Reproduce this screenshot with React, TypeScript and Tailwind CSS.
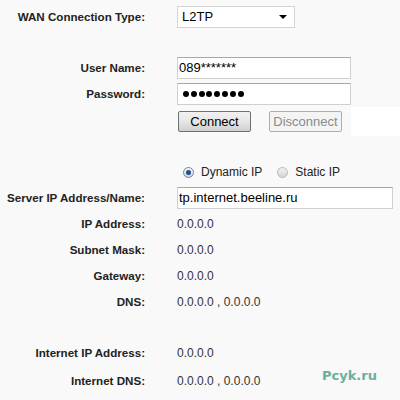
import React from 'react'

const font = { fontFamily: '"Liberation Sans", Arial, sans-serif' }

function Row({
  label,
  children,
  className = '',
}: {
  label?: string
  children?: React.ReactNode
  className?: string
}) {
  return (
    <div className={'flex items-center ' + className}>
      <div className="w-[145px] shrink-0 text-right text-[11.6px] font-bold text-[#222]">{label}</div>
      <div className="ml-[32px] flex items-center text-[12px] text-[#333]">{children}</div>
    </div>
  )
}

function Radio({ checked }: { checked?: boolean }) {
  return (
    <span
      className={
        'flex h-[11px] w-[11px] items-center justify-center rounded-full border ' +
        (checked
          ? 'border-[#6b88a8] bg-gradient-to-b from-[#f4f8fc] to-[#c9d7e6]'
          : 'border-[#b8b8b8] bg-gradient-to-b from-[#f2f2f2] to-[#d6d6d6]')
      }
    >
      {checked && <span className="h-[5px] w-[5px] rounded-full bg-[#1f4f86]" />}
    </span>
  )
}

export default function App() {
  return (
    <div className="relative h-[400px] w-[400px] overflow-hidden bg-[#f9f9f9]" style={font}>
      {/* WAN type */}
      <Row label="WAN Connection Type:" className="mt-[4px] h-[26px]">
        <div className="flex h-[22px] w-[118px] items-center justify-between border border-[#d4d4d4] bg-white pl-[4px] pr-[7px] text-[13px] text-black">
          <span>L2TP</span>
          <span className="h-0 w-0 border-x-[4px] border-t-[4px] border-x-transparent border-t-black" />
        </div>
      </Row>

      {/* account */}
      <Row label="User Name:" className="mt-[25px] h-[26px]">
        <div className="flex h-[22px] w-[174px] items-center border border-[#cfcfcf] border-t-[#a8a8a8] bg-white pl-[1px] text-[13px] text-black">
          089*******
        </div>
      </Row>
      <Row label="Password:" className="h-[26px]">
        <div className="flex h-[22px] w-[174px] items-center gap-[1.8px] border border-[#cfcfcf] border-t-[#a8a8a8] bg-white pl-[5px]">
          {[0, 1, 2, 3, 4, 5, 6, 7].map((i) => (
            <span key={i} className="h-[6px] w-[6px] rounded-full bg-black" />
          ))}
        </div>
      </Row>
      <Row className="h-[29px]">
        <div className="flex items-center">
          <button className="ml-[1px] h-[21px] w-[73px] rounded-[2px] border border-[#707070] bg-gradient-to-b from-[#f2f2f2] via-[#e6e6e6] to-[#cfcfcf] text-[13px] text-black">
            Connect
          </button>
          <button className="ml-[18px] h-[21px] w-[73px] overflow-hidden rounded-[2px] border border-[#adadad] bg-[#f4f4f4] text-[13px] whitespace-nowrap text-[#8a8a8a]">
            Disconnect
          </button>
          <div className="ml-[9px] h-[29px] w-[60px] bg-white" />
        </div>
      </Row>

      {/* ip mode */}
      <Row className="mt-[23px] h-[26px]">
        <div className="ml-[6px] flex items-center text-[12px] text-[#222]">
          <Radio checked />
          <span className="ml-[7px]">Dynamic IP</span>
          <span className="ml-[15px]">
            <Radio />
          </span>
          <span className="ml-[7px]">Static IP</span>
        </div>
      </Row>
      <Row label="Server IP Address/Name:" className="h-[26px]">
        <div className="flex h-[22px] w-[216px] items-center border border-[#cfcfcf] border-t-[#a8a8a8] bg-white pl-[1px] text-[13px] text-black">
          tp.internet.beeline.ru
        </div>
      </Row>
      <Row label="IP Address:" className="h-[26px]">0.0.0.0</Row>
      <Row label="Subnet Mask:" className="h-[26px]">0.0.0.0</Row>
      <Row label="Gateway:" className="h-[26px]">0.0.0.0</Row>
      <Row label="DNS:" className="h-[26px]">0.0.0.0 , 0.0.0.0</Row>

      {/* internet */}
      <Row label="Internet IP Address:" className="mt-[25px] h-[26px]">0.0.0.0</Row>
      <Row label="Internet DNS:" className="mt-[2px] h-[26px]">0.0.0.0 , 0.0.0.0</Row>

      {/* watermark */}
      <div
        className="absolute left-[322px] top-[366px] text-[13px] font-bold text-[#5aa896] opacity-90"
        style={{ fontFamily: '"DejaVu Sans", sans-serif' }}
      >
        Pcyk.ru
      </div>
    </div>
  )
}
